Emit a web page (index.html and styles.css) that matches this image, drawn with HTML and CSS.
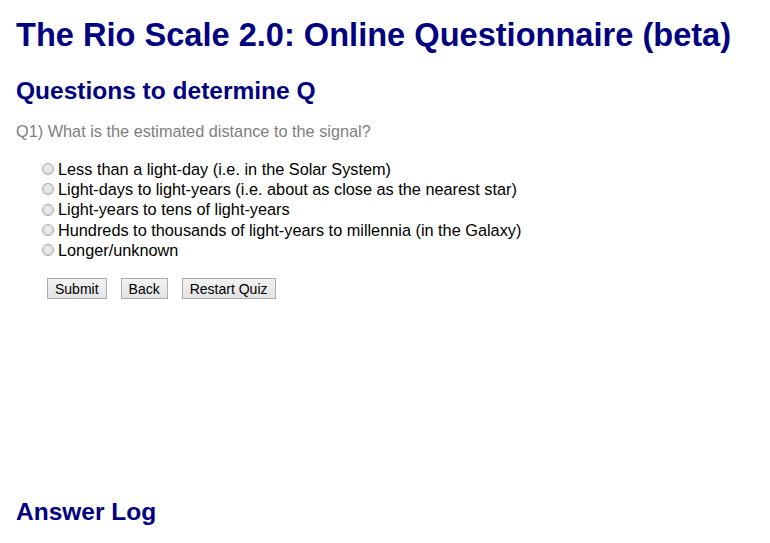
FILE: index.html
```html
<!DOCTYPE html>
<html lang="en">
<head>
    <meta charset="UTF-8">
    <meta name="viewport" content="width=device-width, initial-scale=1.0">
    <title>The Rio Scale 2.0: Online Questionnaire (beta)</title>
    <link rel="stylesheet" href="styles.css">
</head>
<body>
    <h1>The Rio Scale 2.0: Online Questionnaire (beta)</h1>

    <div class="quiz">
        <h2>Questions to determine Q</h2>
        <p class="question">Q1) What is the estimated distance to the signal?</p>
        <form class="answers">
            <label><input type="radio" name="q1" value="1"> Less than a light-day (i.e. in the Solar System)</label>
            <label><input type="radio" name="q1" value="2"> Light-days to light-years (i.e. about as close as the nearest star)</label>
            <label><input type="radio" name="q1" value="3"> Light-years to tens of light-years</label>
            <label><input type="radio" name="q1" value="4"> Hundreds to thousands of light-years to millennia (in the Galaxy)</label>
            <label><input type="radio" name="q1" value="5"> Longer/unknown</label>
            <div class="buttons">
                <button type="button">Submit</button>
                <button type="button">Back</button>
                <button type="button">Restart Quiz</button>
            </div>
        </form>
    </div>

    <div class="log">
        <h2>Answer Log</h2>
    </div>
</body>
</html>
```

FILE: styles.css
```css
/* Base */
body {
    margin: 0;
    padding: 0 16px;
    font-family: "Liberation Sans", Arial, sans-serif;
    font-size: 16.3px;
    color: #000;
    background: #fff;
}

h1 {
    margin: 16px 0 0;
    font-size: 32.6px;
    color: #000080;
}

h2 {
    margin: 0;
    font-size: 24.5px;
    color: #000080;
}

.quiz {
    box-sizing: border-box;
    height: 444px;
    padding-top: 23px;
}

.question {
    margin: 17px 0 18px;
    color: #808080;
}

.answers {
    padding-left: 26px;
}

.answers label {
    display: flex;
    align-items: center;
    height: 20.3px;
}

.answers input[type="radio"] {
    appearance: none;
    width: 12px;
    height: 12px;
    margin: 0 4px 0 0;
    border: 1px solid #a9a9a9;
    border-radius: 50%;
    background: radial-gradient(circle at 50% 40%, #f2f2f2 0%, #dcdcdc 70%, #cfcfcf 100%);
}

.buttons {
    display: flex;
    gap: 14px;
    margin-top: 18px;
    padding-left: 5px;
}

.buttons button {
    height: 21px;
    padding: 0 7px;
    font-family: "Liberation Sans", Arial, sans-serif;
    font-size: 14px;
    color: #000;
    border: 1px solid #adadad;
    border-radius: 0;
    background: linear-gradient(#f2f2f2, #e3e3e3);
}
```
